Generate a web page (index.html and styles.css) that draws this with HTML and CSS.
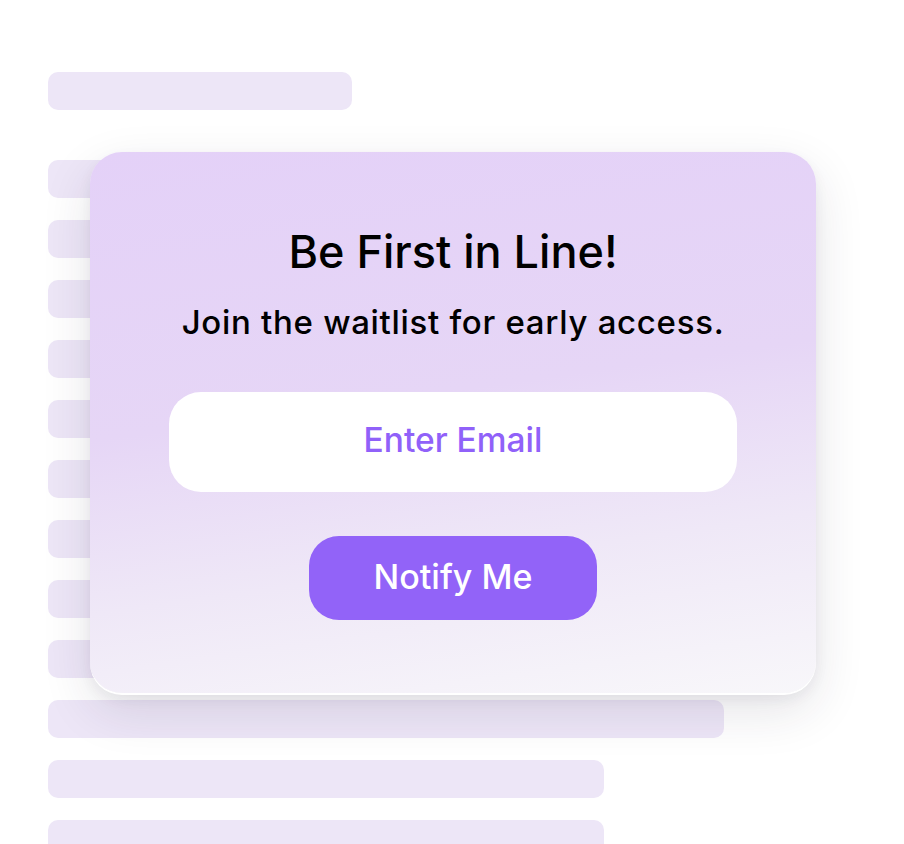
FILE: index.html
```html
<!DOCTYPE html>
<html>
<head>
<meta charset="utf-8">
<link rel="stylesheet" href="styles.css">
</head>
<body>
<div class="page">
  <div class="skeleton">
    <div class="bar w304"></div>
    <div class="rows">
      <div class="bar w676"></div>
      <div class="bar w676"></div>
      <div class="bar w676"></div>
      <div class="bar w676"></div>
      <div class="bar w676"></div>
      <div class="bar w676"></div>
      <div class="bar w676"></div>
      <div class="bar w676"></div>
      <div class="bar w676"></div>
      <div class="bar w676"></div>
      <div class="bar w556"></div>
      <div class="bar w556"></div>
    </div>
  </div>
  <div class="card">
    <h1 class="title">Be First in Line!</h1>
    <p class="subtitle">Join the waitlist for early access.</p>
    <div class="email">Enter Email</div>
    <button class="notify">Notify Me</button>
  </div>
</div>
</body>
</html>
```
FILE: styles.css
```css
html, body {
  margin: 0;
  padding: 0;
  background: #ffffff;
}
.page {
  position: relative;
  width: 904px;
  height: 844px;
  overflow: hidden;
  font-family: "Inter", "Lato", sans-serif;
}
.skeleton {
  padding: 72px 0 0 48px;
  display: flex;
  flex-direction: column;
  gap: 50px;
}
.rows {
  display: flex;
  flex-direction: column;
  gap: 22px;
}
.bar {
  height: 38px;
  border-radius: 10px;
  background: #ede6f7;
}
.w304 { width: 304px; }
.w676 { width: 676px; }
.w556 { width: 556px; }
.card {
  position: absolute;
  left: 90px;
  top: 152px;
  width: 726px;
  height: 541px;
  box-sizing: border-box;
  border-radius: 32px;
  background: linear-gradient(172deg, #e4d1f8 0%, #e6d6f6 45%, #efe8f7 72%, #f8f7fa 100%);
  box-shadow: 0 2px 0 #ffffff, 0 18px 50px rgba(40, 30, 60, 0.12), 0 6px 14px rgba(40, 30, 60, 0.06);
  display: flex;
  flex-direction: column;
  align-items: center;
  padding-top: 72px;
}
.title {
  margin: 0;
  font-size: 45px;
  font-weight: 500;
  line-height: 56px;
  letter-spacing: 0;
  color: #000;
}
.subtitle {
  margin: 22px 0 0;
  font-size: 33px;
  font-weight: 500;
  line-height: 40px;
  letter-spacing: 0.7px;
  color: #000;
}
.email {
  margin-top: 50px;
  width: 568px;
  height: 100px;
  border-radius: 32px;
  background: #ffffff;
  display: flex;
  align-items: center;
  justify-content: center;
  color: #9061f9;
  font-size: 33.5px;
  font-weight: 500;
  padding-bottom: 4px;
  box-sizing: border-box;
}
.notify {
  margin-top: 44px;
  width: 288px;
  height: 84px;
  border: none;
  border-radius: 30px;
  background: #9263f8;
  color: #ffffff;
  font-family: inherit;
  font-size: 34px;
  font-weight: 500;
  padding: 0 0 3px;
}
```
